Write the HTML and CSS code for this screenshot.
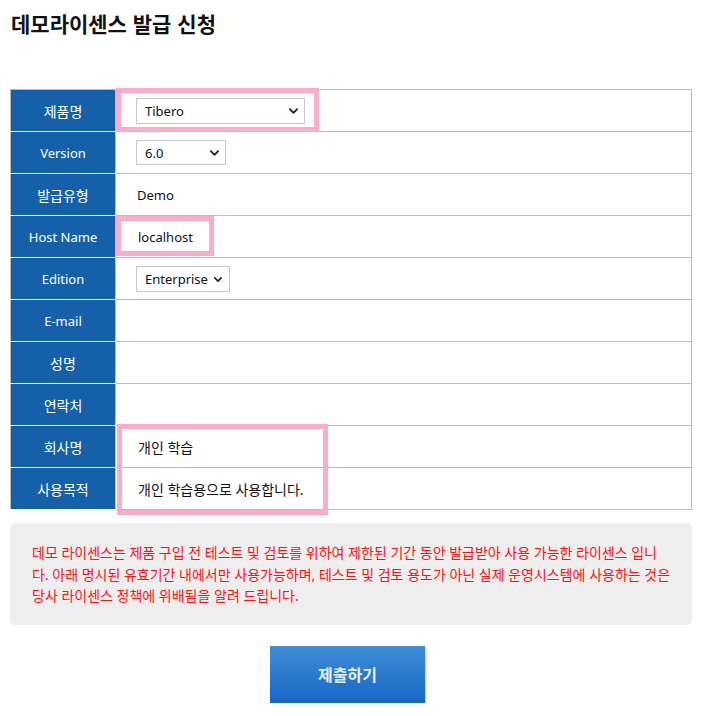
FILE: index.html
```html
<!DOCTYPE html>
<html lang="ko">
<head>
<meta charset="utf-8">
<title>데모라이센스 발급 신청</title>
<link rel="stylesheet" href="styles.css">
</head>
<body>
<div class="page">
  <h1 class="title">데모라이센스 발급 신청</h1>

  <div class="form-wrap">
    <table class="form-table">
      <colgroup><col class="col-label"><col></colgroup>
      <tr>
        <th class="ko">제품명</th>
        <td>
          <span class="select-wrap">
            <select class="sel sel-product"><option>Tibero</option></select>
            <svg class="chev" viewBox="0 0 10 6" width="9" height="6"><path d="M1 1 L5 5 L9 1" /></svg>
          </span>
        </td>
      </tr>
      <tr>
        <th>Version</th>
        <td>
          <span class="select-wrap">
            <select class="sel sel-version"><option>6.0</option></select>
            <svg class="chev" viewBox="0 0 10 6" width="9" height="6"><path d="M1 1 L5 5 L9 1" /></svg>
          </span>
        </td>
      </tr>
      <tr>
        <th class="ko">발급유형</th>
        <td><span class="val">Demo</span></td>
      </tr>
      <tr>
        <th>Host Name</th>
        <td><span class="val val-host">localhost</span></td>
      </tr>
      <tr>
        <th>Edition</th>
        <td>
          <span class="select-wrap">
            <select class="sel sel-edition"><option>Enterprise</option></select>
            <svg class="chev chev-small" viewBox="0 0 10 6" width="8" height="5"><path d="M1 1 L5 5 L9 1" /></svg>
          </span>
        </td>
      </tr>
      <tr>
        <th>E-mail</th>
        <td></td>
      </tr>
      <tr>
        <th class="ko">성명</th>
        <td></td>
      </tr>
      <tr>
        <th class="ko">연락처</th>
        <td></td>
      </tr>
      <tr>
        <th class="ko">회사명</th>
        <td><span class="val val-host ko">개인 학습</span></td>
      </tr>
      <tr>
        <th class="ko">사용목적</th>
        <td><span class="val val-host ko">개인 학습용으로 사용합니다.</span></td>
      </tr>
    </table>
    <div class="mark mark-product"></div>
    <div class="mark mark-host"></div>
    <div class="mark mark-company"></div>
  </div>

  <div class="notice">
    <p>데모 라이센스는 제품 구입 전 테스트 및 검토를 위하여 제한된 기간 동안 발급받아 사용 가능한 라이센스 입니<br>다. 아래 명시된 유효기간 내에서만 사용가능하며, 테스트 및 검토 용도가 아닌 실제 운영시스템에 사용하는 것은<br>당사 라이센스 정책에 위배됨을 알려 드립니다.</p>
  </div>

  <div class="actions">
    <button class="submit" type="button">제출하기</button>
  </div>
</div>
</body>
</html>
```

FILE: styles.css
```css
* { box-sizing: border-box; }

html, body {
  margin: 0;
  padding: 0;
  background: #ffffff;
}

body {
  font-family: "Noto Sans", "Noto Sans CJK KR", sans-serif;
  font-size: 13px;
  color: #111111;
}

.ko { font-size: 14px; }

.page {
  width: 703px;
  padding: 0 11px 0 10px;
}

.title {
  margin: 10px 0 0 1px;
  font-family: "Noto Sans CJK KR", sans-serif;
  font-size: 21px;
  font-weight: 700;
  line-height: 26px;
  color: #111111;
}

.form-wrap {
  position: relative;
  margin-top: 53px;
}

.form-table {
  width: 682px;
  table-layout: fixed;
  border-collapse: collapse;
  border: 1px solid #bbbbbb;
}

.col-label { width: 105px; }

.form-table tr { height: 42px; }

.form-table th {
  background: #1560a9;
  color: #ffffff;
  font-weight: 400;
  text-align: center;
  padding: 0;
  border-top: 1px solid #bbbbbb;
  border-left: 1px solid #bbbbbb;
  border-right: 1px solid #bbbbbb;
  border-bottom: 1px solid #ffffff;
}

.form-table td {
  padding: 0 0 0 20px;
  border: 1px solid #bbbbbb;
  vertical-align: middle;
}

.select-wrap {
  position: relative;
  display: inline-block;
  vertical-align: middle;
}

.sel {
  appearance: none;
  -webkit-appearance: none;
  display: block;
  height: 26px;
  margin: 0;
  padding: 0 0 0 8px;
  border: 1px solid #c8c8c8;
  border-radius: 0;
  background: #ffffff;
  font-family: "Noto Sans", "Noto Sans CJK KR", sans-serif;
  font-size: 13px;
  color: #111111;
}

.sel-product { width: 169px; }
.sel-version { width: 90px; height: 25px; }
.sel-edition { width: 94px; }

.chev {
  position: absolute;
  right: 7px;
  top: 50%;
  margin-top: -3px;
  pointer-events: none;
}

.chev path {
  fill: none;
  stroke: #222222;
  stroke-width: 2;
  stroke-linecap: round;
  stroke-linejoin: round;
}

.chev-small { right: 8px; margin-top: -2px; }

.val {
  display: inline-block;
  padding-left: 1px;
}

.val-host { padding-left: 2px; }

.mark {
  position: absolute;
  border: 5px solid #fcabca;
  pointer-events: none;
}

.mark-product { left: 106px; top: -1px; width: 203px; height: 44px; }
.mark-host { left: 106px; top: 127px; width: 98px; height: 40px; }
.mark-company { left: 107px; top: 335px; width: 211px; height: 91px; }

.notice {
  margin-top: 13px;
  width: 682px;
  background: #eeeeee;
  border-radius: 5px;
  padding: 19px 10px 18px 22px;
}

.notice p {
  margin: 0;
  color: #ff1111;
  font-family: "Noto Sans", "Noto Sans CJK KR", sans-serif;
  font-size: 14px;
  line-height: 21.5px;
  white-space: nowrap;
}

.actions {
  display: flex;
  padding: 21px 0 0 260px;
}

.submit {
  width: 155px;
  height: 57px;
  border: none;
  border-radius: 0;
  background: linear-gradient(#428dd9, #1567c4);
  box-shadow: 1px 1px 2px rgba(0, 0, 0, 0.25);
  color: #e9f0f9;
  font-family: "Noto Sans CJK KR", sans-serif;
  font-size: 16px;
  font-weight: 700;
  cursor: pointer;
}
```
